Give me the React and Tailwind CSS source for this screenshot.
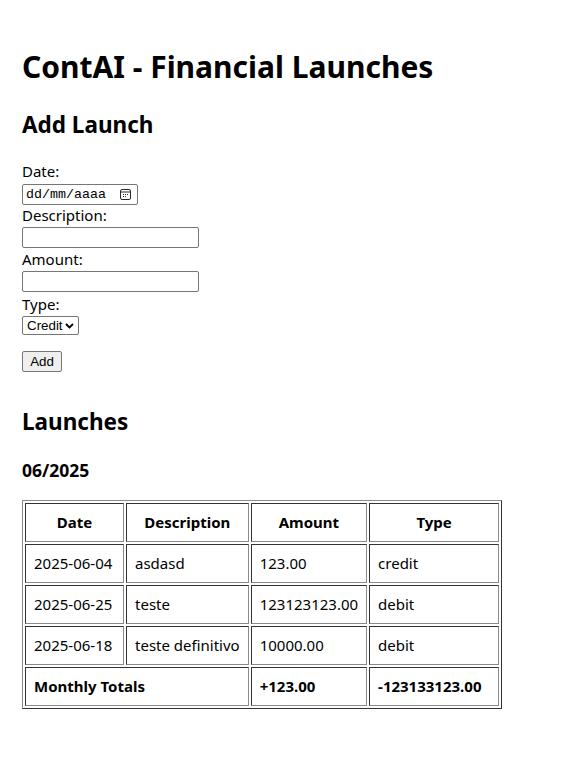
import React from 'react';

const LAUNCHES = [
    { date: '2025-06-04', description: 'asdasd', amount: '123.00', type: 'credit' },
    { date: '2025-06-25', description: 'teste', amount: '123123123.00', type: 'debit' },
    { date: '2025-06-18', description: 'teste definitivo', amount: '10000.00', type: 'debit' },
];

const CalendarIcon = () => (
    <svg width="11" height="11" viewBox="0 0 11 11" fill="none" stroke="#2a2a2a" strokeWidth="1">
        <rect x="0.5" y="0.5" width="10" height="10" rx="1.5" />
        <line x1="0.5" y1="3" x2="10.5" y2="3" />
        <rect x="3" y="5" width="1" height="1" fill="#2a2a2a" stroke="none" />
        <rect x="5" y="5" width="1" height="1" fill="#2a2a2a" stroke="none" />
        <rect x="7" y="5" width="1" height="1" fill="#2a2a2a" stroke="none" />
        <rect x="3" y="7" width="1" height="1" fill="#2a2a2a" stroke="none" />
        <rect x="5" y="7" width="1" height="1" fill="#2a2a2a" stroke="none" />
    </svg>
);

// celulas com borda "inset" igual ao border="1" do html
const cellCls = 'border border-t-[#333] border-l-[#333] border-b-[#8a8a8a] border-r-[#8a8a8a] px-[8px] py-[8px] leading-[21px] whitespace-nowrap';

const Cell = ({ children, bold }) => (
    <td className={`${cellCls} text-left ${bold ? 'font-bold' : ''}`}>{children}</td>
);

export default function App() {
    return (
        <div className="min-h-screen bg-white px-[22px] pt-[22px] pb-10 text-black text-[15px]" style={{ fontFamily: '"Noto Sans", "Open Sans", sans-serif' }}>
            <h1 className="text-[30px] font-bold leading-[42px] mt-[24px] mb-[21px]">ContAI - Financial Launches</h1>

            <h2 className="text-[22.5px] font-bold leading-[32px] mb-[20px]">Add Launch</h2>

            {/* formulario */}
            <div className="flex flex-col items-start">
                <label className="leading-[21px]">Date:</label>
                <div className="w-[116px] h-[21px] border border-[#767676] rounded-[2px] flex items-center justify-between pl-[3px] pr-[6px] mt-[2px]">
                    <span className="text-[13.33px]" style={{ fontFamily: '"Liberation Mono", "DejaVu Sans Mono", monospace' }}>dd/mm/aaaa</span>
                    <CalendarIcon />
                </div>
                <label className="leading-[21px]">Description:</label>
                <input className="w-[177px] h-[21px] border border-[#767676] rounded-[2px] mt-[1px] mb-[1px]" />
                <label className="leading-[21px]">Amount:</label>
                <input className="w-[177px] h-[21px] border border-[#767676] rounded-[2px] mt-[1px] mb-[1px]" />
                <label className="leading-[21px] mt-[1px]">Type:</label>
                <div className="h-[19px] border border-[#767676] rounded-[2px] flex items-center gap-[2px] pl-[4px] pr-[4px] mt-[1px] text-[13.33px]" style={{ fontFamily: '"Liberation Sans", Arial, sans-serif' }}>
                    <span>Credit</span>
                    <svg width="9" height="6" viewBox="0 0 9 6"><path d="M1 1 L4.5 4.5 L8 1" fill="none" stroke="#000" strokeWidth="1.8" /></svg>
                </div>
                <button className="mt-[16px] w-[40px] h-[21px] bg-[#efefef] border border-[#767676] rounded-[2px] text-[13.33px] leading-none" style={{ fontFamily: '"Liberation Sans", Arial, sans-serif' }}>
                    Add
                </button>
            </div>

            <h2 className="text-[22.5px] font-bold leading-[32px] mt-[34px]">Launches</h2>

            <h3 className="text-[17.5px] font-bold leading-[25px] mt-[20px] mb-[17px]">06/2025</h3>

            <table className="border border-t-[#8a8a8a] border-l-[#8a8a8a] border-b-[#333] border-r-[#333] border-separate border-spacing-[2px]">
                <thead>
                    <tr>
                        <th className={`${cellCls} font-bold text-center w-[99px]`}>Date</th>
                        <th className={`${cellCls} font-bold text-center w-[120px]`}>Description</th>
                        <th className={`${cellCls} font-bold text-center w-[116px]`}>Amount</th>
                        <th className={`${cellCls} font-bold text-center w-[130px]`}>Type</th>
                    </tr>
                </thead>
                <tbody>
                    {LAUNCHES.map((l, i) => (
                        <tr key={i}>
                            <Cell>{l.date}</Cell>
                            <Cell>{l.description}</Cell>
                            <Cell>{l.amount}</Cell>
                            <Cell>{l.type}</Cell>
                        </tr>
                    ))}
                    <tr>
                        <td colSpan={2} className={`${cellCls} font-bold text-left`}>Monthly Totals</td>
                        <Cell bold>+123.00</Cell>
                        <Cell bold>-123133123.00</Cell>
                    </tr>
                </tbody>
            </table>
        </div>
    );
}
